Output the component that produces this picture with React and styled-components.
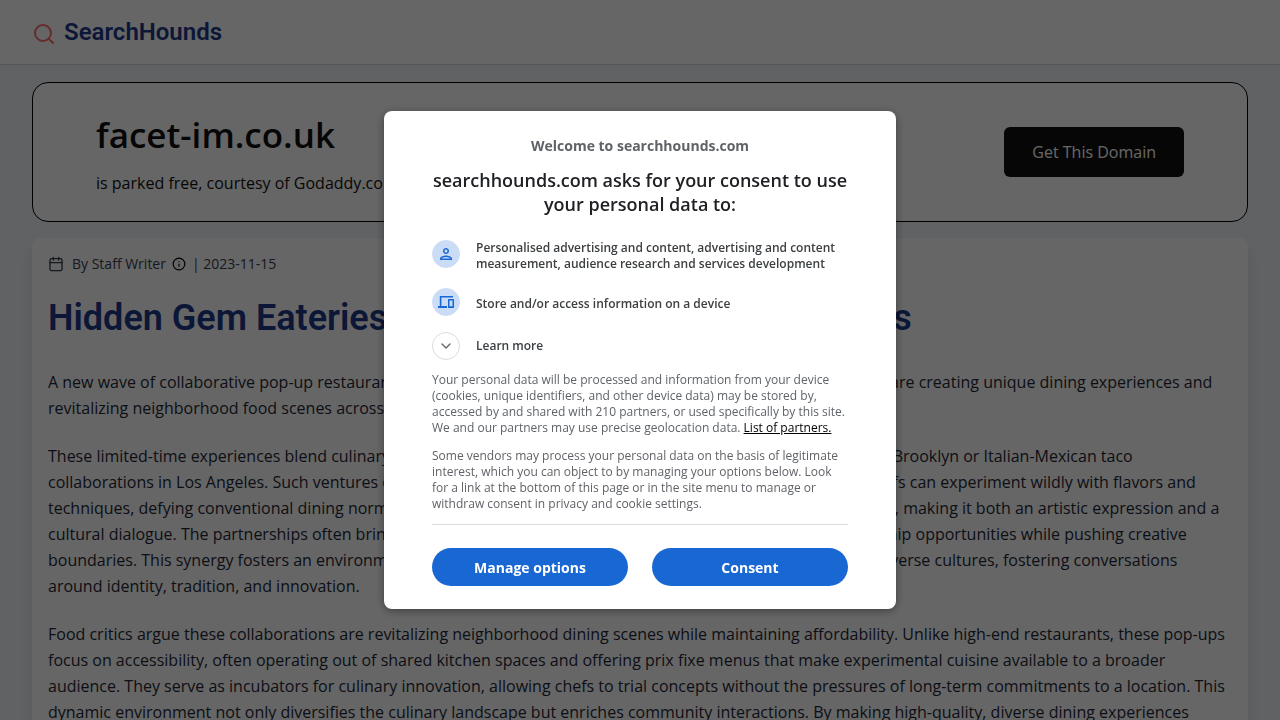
import React from "react";
import styled, { createGlobalStyle } from "styled-components";
import { Search, Calendar, Info, ChevronDown } from "lucide-react";
import { MdOutlinePerson } from "react-icons/md";

const GlobalStyle = createGlobalStyle`
  * {
    box-sizing: border-box;
  }
  body {
    margin: 0;
    overflow: hidden;
    background: #f1f5f9;
    color: #1f2937;
    font-family: "Open Sans", sans-serif;
    font-size: 16px;
    line-height: 26px;
  }
  h1, h2, h3, p, ul {
    margin: 0;
    padding: 0;
  }
`;

const Header = styled.header`
  display: flex;
  align-items: center;
  height: 65px;
  padding: 0 32px;
  background: #fff;
  border-bottom: 1px solid #d1d5db;
`;

const Logo = styled.a`
  display: flex;
  align-items: center;
  gap: 8px;
  color: #1e3a8a;
  font-family: Roboto, sans-serif;
  font-size: 24px;
  font-weight: 600;
  line-height: 32px;
  text-decoration: none;
  svg {
    margin-top: 4px;
    color: #ff6b6b;
  }
`;

const Main = styled.main`
  display: flex;
  flex-direction: column;
  gap: 16px;
  padding: 17px 32px;
`;

const Banner = styled.section`
  display: flex;
  align-items: center;
  justify-content: space-between;
  padding: 24px 63px;
  background: #fff;
  border: 1px solid #000;
  border-radius: 16px;
`;

const DomainName = styled.h2`
  color: #111;
  font-size: 35px;
  font-weight: 600;
  line-height: 56px;
`;

const DomainNote = styled.p`
  padding: 7px 0 1px;
  color: #111;
`;

const DomainButton = styled.button`
  height: 50px;
  padding: 0 28px;
  border: 0;
  border-radius: 6px;
  background: #111;
  color: #fff;
  font: inherit;
  cursor: pointer;
`;

const Article = styled.article`
  padding: 16px 21px 16px 16px;
  background: #fff;
  border-radius: 8px;
  box-shadow: 0 10px 15px rgba(0, 0, 0, 0.1);
`;

const Meta = styled.div`
  display: flex;
  align-items: center;
  gap: 6px;
  color: #374151;
  font-size: 14px;
  line-height: 20px;
`;

const Byline = styled.span`
  padding-left: 2px;
`;

const InfoIcon = styled(Info)`
  color: #000;
`;

const Title = styled.h1`
  margin: 20px 0 27px;
  color: #1e3a8a;
  font-family: Roboto, sans-serif;
  font-size: 36px;
  font-weight: 600;
  line-height: 48px;
`;

const Paragraph = styled.p`
  margin-bottom: 22px;
`;

const Overlay = styled.div`
  position: fixed;
  inset: 0;
  display: flex;
  align-items: center;
  justify-content: center;
  background: rgba(0, 0, 0, 0.6);
`;

const Dialog = styled.div`
  width: 100%;
  max-width: 512px;
  padding: 25px 48px 23px;
  background: #fff;
  border-radius: 8px;
  box-shadow: 0 2px 8px rgba(0, 0, 0, 0.4);
  color: #202124;
`;

const Welcome = styled.p`
  color: #5f6368;
  font-size: 14px;
  font-weight: 700;
  line-height: 20px;
  text-align: center;
`;

const Question = styled.h2`
  margin-top: 12px;
  font-size: 18px;
  font-weight: 600;
  line-height: 24px;
  text-align: center;
`;

const Purposes = styled.ul`
  display: flex;
  flex-direction: column;
  gap: 16px;
  margin-top: 24px;
  list-style: none;
`;

const purposeRow = `
  display: flex;
  align-items: center;
  gap: 16px;
  color: #3c4043;
  font-size: 12px;
  font-weight: 600;
  line-height: 16px;
`;

const RoundIcon = styled.span`
  display: flex;
  flex: none;
  align-items: center;
  justify-content: center;
  align-self: flex-start;
  width: 28px;
  height: 28px;
  border: 1px solid ${(props) => (props.$plain ? "#dadce0" : "#cbdcf6")};
  border-radius: 50%;
  background: ${(props) => (props.$plain ? "#fff" : "#cbdcf6")};
  color: ${(props) => (props.$plain ? "#5f6368" : "#1967d2")};
`;

const Purpose = styled.li`
  ${purposeRow}
  min-height: 32px;
`;

const LearnMore = styled.button`
  ${purposeRow}
  margin-top: 12px;
  padding: 0;
  border: 0;
  background: none;
  font-family: inherit;
  cursor: pointer;
`;

const Details = styled.div`
  display: flex;
  flex-direction: column;
  gap: 12px;
  margin-top: 12px;
  padding-bottom: 12px;
  border-bottom: 1px solid #dadce0;
  color: #5f6368;
  font-size: 12px;
  line-height: 16px;
  a {
    color: #000;
  }
`;

const Actions = styled.div`
  display: flex;
  gap: 24px;
  margin-top: 23px;
`;

const ActionButton = styled.button`
  flex: 1;
  height: 38px;
  border: 0;
  border-radius: 19px;
  background: #1967d2;
  color: #fff;
  font-family: inherit;
  font-size: 14px;
  font-weight: 700;
  cursor: pointer;
`;

const DevicesIcon = () => (
  <svg width="16" height="12" viewBox="0 0 16 12" fill="currentColor">
    <path d="M2 0h13v1.6H3.4v8.4H9v2H0v-2h1.8V0z" />
    <path
      fillRule="evenodd"
      d="M10.6 3h4.8c.4 0 .6.2.6.6v7.8c0 .4-.2.6-.6.6h-4.8c-.4 0-.6-.2-.6-.6V3.6c0-.4.2-.6.6-.6zm.9 1.6v5.6h3V4.6z"
    />
  </svg>
);

const purposes = [
  {
    icon: <MdOutlinePerson size={18} />,
    text: "Personalised advertising and content, advertising and content measurement, audience research and services development",
  },
  {
    icon: <DevicesIcon />,
    text: "Store and/or access information on a device",
  },
];

const paragraphs = [
  "A new wave of collaborative pop-up restaurants in vacant storefronts, breweries and shared kitchens nationwide are creating unique dining experiences and revitalizing neighborhood food scenes across the country.",
  "These limited-time experiences blend culinary traditions in unexpected ways, such as Korean-Southern brunch in Brooklyn or Italian-Mexican taco collaborations in Los Angeles. Such ventures offer a low-risk testing ground for new ideas, where experienced chefs can experiment wildly with flavors and techniques, defying conventional dining norms. Each menu tells a story drawn from its creators' personal heritage, making it both an artistic expression and a cultural dialogue. The partnerships often bring together established and emerging talent, providing rare mentorship opportunities while pushing creative boundaries. This synergy fosters an environment where diners can gather and learn more about the food from diverse cultures, fostering conversations around identity, tradition, and innovation.",
  "Food critics argue these collaborations are revitalizing neighborhood dining scenes while maintaining affordability. Unlike high-end restaurants, these pop-ups focus on accessibility, often operating out of shared kitchen spaces and offering prix fixe menus that make experimental cuisine available to a broader audience. They serve as incubators for culinary innovation, allowing chefs to trial concepts without the pressures of long-term commitments to a location. This dynamic environment not only diversifies the culinary landscape but enriches community interactions. By making high-quality, diverse dining experiences",
];

const ConsentDialog = () => {
  return (
    <Overlay>
      <Dialog role="dialog" aria-modal="true" aria-labelledby="consent-title">
        <Welcome>Welcome to searchhounds.com</Welcome>
        <Question id="consent-title">
          searchhounds.com asks for your consent to use your personal data to:
        </Question>
        <Purposes>
          {purposes.map(({ icon, text }) => (
            <Purpose key={text}>
              <RoundIcon>{icon}</RoundIcon>
              <span>{text}</span>
            </Purpose>
          ))}
        </Purposes>
        <LearnMore type="button">
          <RoundIcon $plain>
            <ChevronDown size={16} strokeWidth={2} />
          </RoundIcon>
          Learn more
        </LearnMore>
        <Details>
          <p>
            Your personal data will be processed and information from your
            device (cookies, unique identifiers, and other device data) may be
            stored by, accessed by and shared with 210 partners, or used
            specifically by this site. We and our partners may use precise
            geolocation data. <a href="#partners">List of partners.</a>
          </p>
          <p>
            Some vendors may process your personal data on the basis of
            legitimate interest, which you can object to by managing your
            options below. Look for a link at the bottom of this page or in the
            site menu to manage or withdraw consent in privacy and cookie
            settings.
          </p>
        </Details>
        <Actions>
          <ActionButton type="button">Manage options</ActionButton>
          <ActionButton type="button">Consent</ActionButton>
        </Actions>
      </Dialog>
    </Overlay>
  );
};

const App = () => {
  return (
    <>
      <GlobalStyle />
      <Header>
        <Logo href="#home">
          <Search size={24} strokeWidth={2} />
          SearchHounds
        </Logo>
      </Header>
      <Main>
        <Banner>
          <div>
            <DomainName>facet-im.co.uk</DomainName>
            <DomainNote>is parked free, courtesy of Godaddy.com</DomainNote>
          </div>
          <DomainButton type="button">Get This Domain</DomainButton>
        </Banner>
        <Article>
          <Meta>
            <Calendar size={16} />
            <Byline>By Staff Writer</Byline>
            <InfoIcon size={14} />
            <span>| 2023-11-15</span>
          </Meta>
          <Title>Hidden Gem Eateries: The Rise of Collaborative Cafes</Title>
          {paragraphs.map((text) => (
            <Paragraph key={text}>{text}</Paragraph>
          ))}
        </Article>
      </Main>
      <ConsentDialog />
    </>
  );
};

export default App;
